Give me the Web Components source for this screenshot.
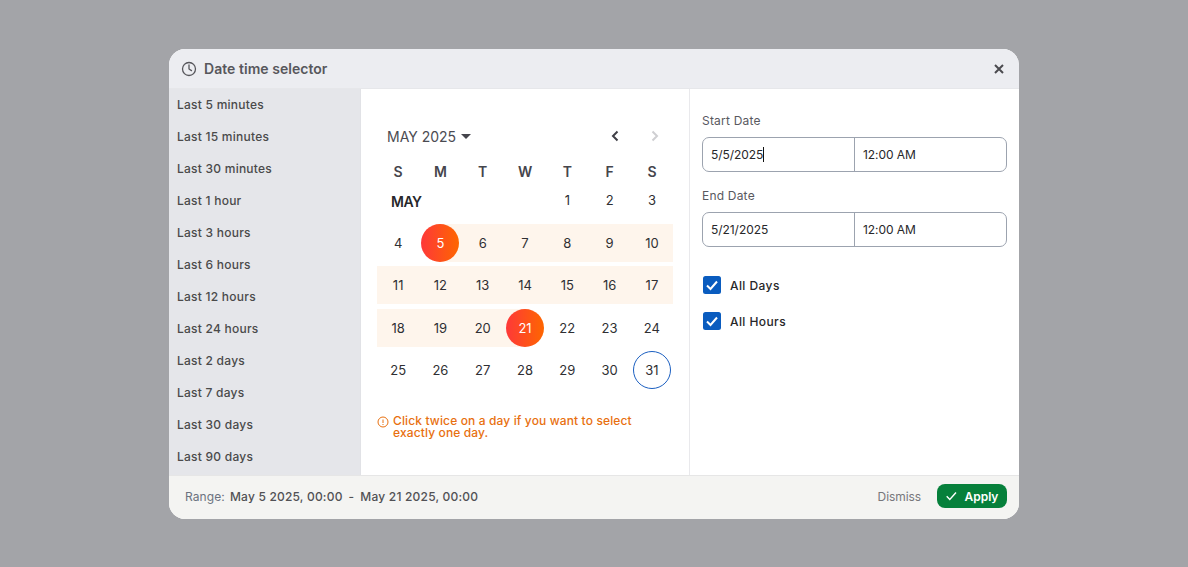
<!DOCTYPE html>
<html><head><meta charset="utf-8"><style>
html,body{margin:0;height:100%}
body{background:#a3a4a8;font-family:Inter,"Liberation Sans",sans-serif;width:1188px;height:567px;overflow:hidden}
date-dialog{margin:49px 0 0 169px}
</style></head><body>
<date-dialog></date-dialog>
<script>
function el(name,html){customElements.define(name,class extends HTMLElement{constructor(){super();this.attachShadow({mode:'open'}).innerHTML=typeof html==='function'?html(this):html;}});}
el('preset-list',`<style>:host{display:flex;flex-direction:column;width:191px;background:#e5e6ea;border-right:1px solid #e1e2e6;box-sizing:content-box}
div{height:32px;line-height:32px;padding-left:8px;font-size:12px;font-weight:500;color:#4a4a4a;letter-spacing:.24px;white-space:nowrap}</style>`+
['Last 5 minutes','Last 15 minutes','Last 30 minutes','Last 1 hour','Last 3 hours','Last 6 hours','Last 12 hours','Last 24 hours','Last 2 days','Last 7 days','Last 30 days','Last 90 days'].map(t=>`<div>${t}</div>`).join(''));
el('cal-month',()=>{
 const cell=(d,c='')=>`<div class="c ${c}"><span>${d}</span></div>`;
 return `<style>
 :host{display:block;border-right:1px solid #e9e9ec;padding:0 16px;box-sizing:border-box;width:329px;color:#2f2f33}
 .top{display:flex;align-items:center;height:20px;margin-top:37px;padding:0 10px}
 .mo{font-size:14px;color:#4b4b52;letter-spacing:0;display:flex;align-items:center;gap:5px}
 .tri{width:0;height:0;border:5px solid transparent;border-top:5px solid #45454c;border-bottom:0}
 .nav{margin-left:auto;display:flex;gap:26px;margin-right:1px}
 svg{display:block}
 .r{display:grid;grid-template-columns:repeat(7,42.3px);height:38px;margin-bottom:4.33px;align-items:center;font-size:13px;text-align:center}
 .hd{font-weight:600;font-size:14px;color:#45454c;height:20px;margin:15px 0 0}
 .may{height:20px;margin:10px 0 13px}
 .may b{font-weight:600;font-size:14px;grid-column:span 4;text-align:left;padding-left:14px;color:#27272a;letter-spacing:-.5px}
 .c{height:38px;display:flex;align-items:center;justify-content:center;position:relative;letter-spacing:.05px}
 .may .c{height:20px}
 .may .c span{margin-top:-2px}
 .b{background:#fef5ec}
 .s{position:relative;z-index:0;color:#fff}
 .s:before{content:"";position:absolute;width:38px;height:38px;border-radius:50%;left:2.15px;top:0;background:linear-gradient(90deg,#fe3839,#fe6600);z-index:-1}
 .half-l{background:linear-gradient(90deg,#fef5ec 50%,transparent 50%)}
 .half-r{background:linear-gradient(90deg,transparent 50%,#fef5ec 50%)}
 .t:before{content:"";position:absolute;width:38px;height:38px;box-sizing:border-box;border-radius:50%;left:2.15px;top:0;border:1px solid #1b5fc1}
 .t span{position:relative}
 .note{display:flex;gap:4px;margin-top:26px;font-size:12px;font-weight:500;line-height:12px;color:#e8700f;letter-spacing:.13px}
 .note svg{flex:none;margin-top:1px}
 .note div{width:250px}
 </style>
 <div class="top"><div class="mo">MAY 2025 <i class="tri"></i></div><div class="nav">
 <svg width="14" height="14" viewBox="0 0 14 14" fill="none" stroke="#3f3f46" stroke-width="2"><path d="M9.5 2.5 5 7l4.500 4.500"/></svg>
 <svg width="14" height="14" viewBox="0 0 14 14" fill="none" stroke="#cfcfd2" stroke-width="2"><path d="M4.500 2.500 9 7l-4.500 4.500"/></svg></div></div>
 <div class="r hd">${['S','M','T','W','T','F','S'].map(d=>`<div>${d}</div>`).join('')}</div>
 <div class="r may"><b>MAY</b>${[1,2,3].map(d=>cell(d)).join('')}</div>
 <div class="r">${cell(4)}${cell(5,'s half-r')}${[6,7,8,9,10].map(d=>cell(d,'b')).join('')}</div>
 <div class="r">${[11,12,13,14,15,16,17].map(d=>cell(d,'b')).join('')}</div>
 <div class="r">${[18,19,20].map(d=>cell(d,'b')).join('')}${cell(21,'s half-l')}${[22,23,24].map(d=>cell(d)).join('')}</div>
 <div class="r">${[25,26,27,28,29,30].map(d=>cell(d)).join('')}${cell(31,'t')}</div>
 <div class="note"><svg width="12" height="12" viewBox="0 0 12 12" fill="none" stroke="#e8700f"><circle cx="6" cy="6" r="5"/><path d="M6 3.500v3.500M6 8v1"/></svg><div>Click twice on a day if you want to select exactly one day.</div></div>`;
});
el('date-field',h=>`<style>:host{display:block;margin-bottom:15px}
 label{display:block;font-size:12px;color:#59595f;height:17px;line-height:17px;margin-bottom:8px;letter-spacing:.2px}
 .box{display:flex;height:35px;box-sizing:border-box;border:1px solid #9ca3af;border-radius:7px;font-size:12px;color:#27272a;line-height:33px;letter-spacing:-.05px}
 .a{padding-left:8px;border-right:1px solid #9ca3af;box-sizing:content-box;width:143px}
 .b{padding-left:8px}
 .cur{display:inline-block;width:1px;height:15px;background:#111;vertical-align:-3px}
 </style><label>${h.getAttribute('label')}</label><div class="box"><div class="a">${h.getAttribute('date')}${h.hasAttribute('caret')?'<i class="cur"></i>':''}</div><div class="b">12:00 AM</div></div>`);
el('check-row',h=>`<style>:host{display:flex;align-items:center;gap:9px;height:18px;margin-bottom:18px;font-size:12px;font-weight:500;color:#27272a;letter-spacing:.42px;padding-left:1px}
 svg{display:block;flex:none}</style><svg width="18" height="18" viewBox="0 0 18 18"><rect width="18" height="18" rx="2.500" fill="#0a5cbf"/><path d="M4 9.500 7.500 13 14 5.500" fill="none" stroke="#fff" stroke-width="2"/></svg><slot></slot>`);
el('date-form',`<style>:host{display:block;flex:1;padding:23px 12px 0 12px;box-sizing:border-box}.sp{height:14px}</style>
 <date-field label="Start Date" date="5/5/2025" caret></date-field><date-field label="End Date" date="5/21/2025"></date-field><div class="sp"></div>
 <check-row>All Days</check-row><check-row>All Hours</check-row>`);
el('date-dialog',`<style>:host{display:flex;flex-direction:column;width:850px;height:470px;border-radius:16px;overflow:hidden;background:#fff}
 header{height:39px;background:#ecedf1;border-bottom:1px solid #e6e7ea;display:flex;align-items:center;padding:0 13px 0 12px;font-size:14px;font-weight:600;color:#57575c;letter-spacing:.04px;gap:7px;flex:none}
 header svg:last-child{margin-left:auto}
 main{flex:1;display:flex;min-height:0}
 footer{height:44px;box-sizing:border-box;flex:none;background:#f4f4f2;border-top:1px solid #e6e6e6;display:flex;align-items:center;padding:0 12px 3px 16px;font-size:12px;font-weight:500;color:#515155;letter-spacing:.2px}
 .lab{color:#6b7280;font-weight:400;margin-right:5px;letter-spacing:.1px}
 .dash{margin:0 6px}
 .dis{margin-left:auto;color:#77777b;font-weight:400;margin-right:16px;letter-spacing:-.08px}
 button{all:unset;height:24px;width:70px;box-sizing:border-box;border-radius:8px;background:#06803b;color:#fff;font-weight:600;font-size:12px;letter-spacing:-.05px;display:flex;align-items:center;justify-content:center;gap:8px;font-family:inherit}
 </style>
 <header><svg width="16" height="16" viewBox="0 0 16 16" fill="none" stroke="#57575c" stroke-width="1.300" stroke-linecap="round" stroke-linejoin="round"><circle cx="8" cy="8" r="6.500"/><path d="M8 4v4l2.500 1.600"/></svg><span>Date time selector</span>
 <svg width="14" height="14" viewBox="0 0 14 14" fill="none" stroke="#4a4a4f" stroke-width="2"><path d="M3 3l8 8M11 3l-8 8"/></svg></header>
 <main><preset-list></preset-list><cal-month></cal-month><date-form></date-form></main>
 <footer><span class="lab">Range:</span><span>May 5 2025, 00:00</span><span class="dash">-</span><span>May 21 2025, 00:00</span><span class="dis">Dismiss</span>
 <button><svg width="11" height="10" viewBox="0 0 11 10" fill="none" stroke="#fff" stroke-width="1.400"><path d="M.7 5.300 3.800 8.400 10 1.500"/></svg>Apply</button></footer>`);
</script>
</body></html>
